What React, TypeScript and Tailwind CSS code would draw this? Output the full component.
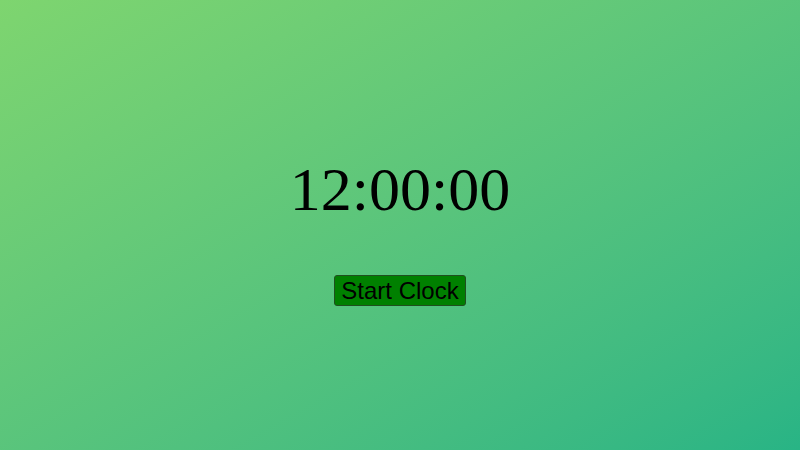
export default function App() {
  return (
    <div className="flex h-[450px] w-full flex-col items-center justify-center bg-linear-to-br from-[#7ed56f] to-[#28b485]">
      <div className="mt-[8px] font-['Liberation_Serif',serif] text-[62px] leading-[72px] text-black">
        12:00:00
      </div>
      <button className="mt-[50px] rounded-[3px] border border-[#1f4f1f] bg-[#008000] px-[6px] py-[1px] font-['Liberation_Sans',Arial,sans-serif] text-[24px] leading-[27px] text-black">
        Start Clock
      </button>
    </div>
  );
}
